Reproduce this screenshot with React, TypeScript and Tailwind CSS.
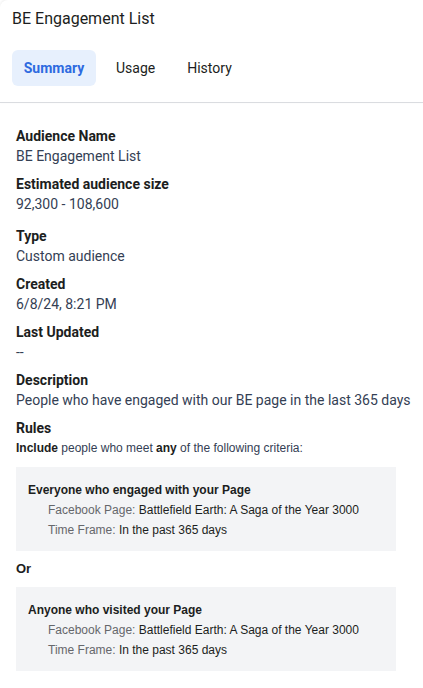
import React from 'react'

const fields = [
  { label: 'Audience Name', value: 'BE Engagement List' },
  { label: 'Estimated audience size', value: '92,300 - 108,600' },
  { label: 'Type', value: 'Custom audience' },
  { label: 'Created', value: '6/8/24, 8:21 PM' },
  { label: 'Last Updated', value: '--' },
  { label: 'Description', value: 'People who have engaged with our BE page in the last 365 days' },
]

const rules = [
  { title: 'Everyone who engaged with your Page' },
  { title: 'Anyone who visited your Page' },
]

function RuleBox({ title }: { title: string }) {
  return (
    <div className="bg-[#f3f4f6] w-[380px] h-[84px] px-3 pt-[13px] font-['Liberation_Sans',Arial,sans-serif] text-[12px] leading-[20px]">
      <div className="font-bold text-[#1c1e21]">{title}</div>
      <div className="pl-5">
        <div>
          <span className="text-[#65676b]">Facebook Page: </span>
          <span className="text-[#1c1e21]">Battlefield Earth: A Saga of the Year 3000</span>
        </div>
        <div>
          <span className="text-[#65676b]">Time Frame: </span>
          <span className="text-[#1c1e21]">In the past 365 days</span>
        </div>
      </div>
    </div>
  )
}

export default function App() {
  return (
    <div className="w-[423px] h-[688px] bg-white font-['Roboto',sans-serif] overflow-hidden">
      <div className="rounded-tl-lg shadow-[0_-1px_3px_rgba(0,0,0,0.08)]">
        <div className="h-[38px] pl-3 pt-[7px] text-[16px] leading-[24px] text-[#1c1e21]">BE Engagement List</div>
        <div className="flex items-center gap-2 pl-3 pt-3 pb-4">
          <div className="h-9 w-[84px] flex items-center justify-center rounded-md bg-[#e7f0fd] text-[#2d6ae0] text-sm font-bold">
            Summary
          </div>
          <div className="h-9 px-3 flex items-center text-sm text-[#1c1e21]">Usage</div>
          <div className="h-9 px-3 flex items-center text-sm text-[#1c1e21]">History</div>
        </div>
        <div className="h-px bg-[#dadce0]" />
      </div>

      <div className="px-4 pt-[23px]">
        {fields.map((f, i) => (
          <div key={f.label} className={i === 2 ? 'mt-3' : i > 0 ? 'mt-2' : ''}>
            <div className="text-sm leading-5 font-bold text-[#1c1e21]">{f.label}</div>
            <div className="text-sm leading-5 text-[#344054] whitespace-nowrap">{f.value}</div>
          </div>
        ))}
        <div className="mt-2 text-sm leading-5 font-bold text-[#1c1e21]">Rules</div>
        <div className="text-[12px] leading-5 font-['Liberation_Sans',Arial,sans-serif] text-[#344054]">
          <span className="font-bold text-[#1c1e21]">Include</span> people who meet{' '}
          <span className="font-bold text-[#1c1e21]">any</span> of the following criteria:
        </div>
        <div className="mt-[9px]">
          <RuleBox title={rules[0].title} />
        </div>
        <div className="h-[36px] flex items-center text-[13px] font-bold text-[#1c1e21] font-['Liberation_Sans',Arial,sans-serif]">
          Or
        </div>
        <RuleBox title={rules[1].title} />
      </div>
    </div>
  )
}
